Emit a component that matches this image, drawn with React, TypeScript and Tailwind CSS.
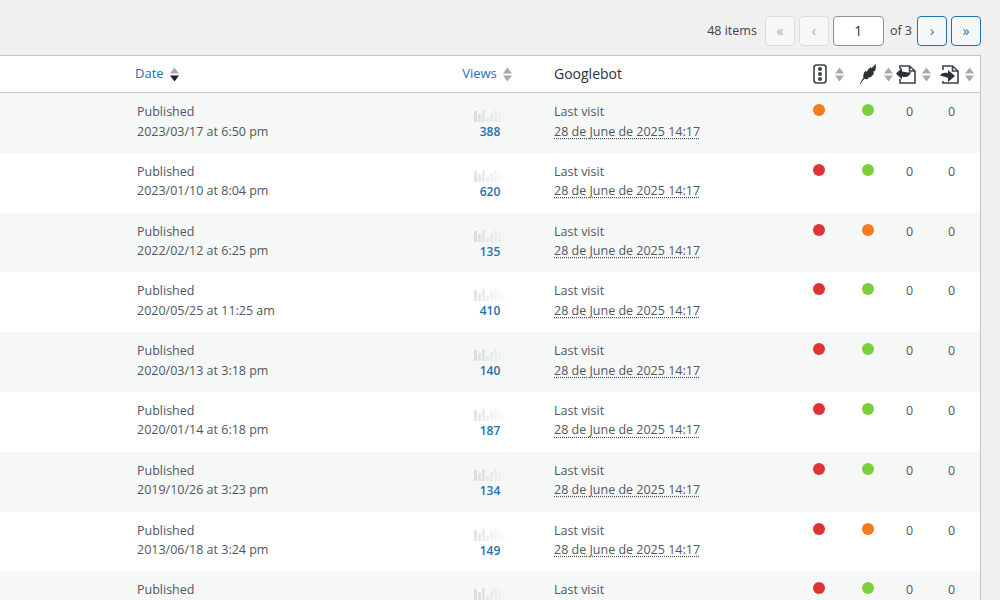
const cols = 'grid grid-cols-[127px_309px_108px_259px_49px_34px_42px_1fr]'

const rows = [
  { date: '2023/03/17 at 6:50 pm', views: 388, a: 'orange', b: 'green' },
  { date: '2023/01/10 at 8:04 pm', views: 620, a: 'red', b: 'green' },
  { date: '2022/02/12 at 6:25 pm', views: 135, a: 'red', b: 'orange' },
  { date: '2020/05/25 at 11:25 am', views: 410, a: 'red', b: 'green' },
  { date: '2020/03/13 at 3:18 pm', views: 140, a: 'red', b: 'green' },
  { date: '2020/01/14 at 6:18 pm', views: 187, a: 'red', b: 'green' },
  { date: '2019/10/26 at 3:23 pm', views: 134, a: 'red', b: 'green' },
  { date: '2013/06/18 at 3:24 pm', views: 149, a: 'red', b: 'orange' },
  { date: '2012/11/02 at 5:10 pm', views: 152, a: 'red', b: 'green' },
]

function Dot({ color }: { color: string }) {
  const bg = color === 'red' ? 'bg-[#df3434]' : color === 'orange' ? 'bg-[#f47c1c]' : 'bg-[#7ad03a]'
  return <span className={`mt-px block size-3 rounded-full ${bg}`} />
}

function Sort({ active }: { active?: boolean }) {
  return (
    <svg width="9" height="15" viewBox="0 0 9 15" className="shrink-0">
      <path d="M4.5 0.5 L9 6.5 H0Z" fill="#a7aaad" />
      <path d="M0 8.5 H9 L4.5 14.5Z" fill={active ? '#1d2327' : '#a7aaad'} />
    </svg>
  )
}

function Spark() {
  const bars = [11, 8, 12, 5, 9, 12, 9, 7]
  return (
    <svg width="32" height="13" viewBox="0 0 32 13">
      {bars.map((h, i) => (
        <rect key={i} x={i * 4} y={13 - h} width="3" height={h} fill="#000" opacity={0.1 - i * 0.012} />
      ))}
    </svg>
  )
}

function LightIcon() {
  return (
    <svg width="14" height="20" viewBox="0 0 14 20" className="shrink-0">
      <rect x="1" y="1" width="12" height="18" rx="2.5" fill="none" stroke="#3c434a" strokeWidth="1.6" />
      <circle cx="7" cy="5" r="2" fill="#3c434a" />
      <circle cx="7" cy="10" r="2" fill="#3c434a" />
      <circle cx="7" cy="15" r="2" fill="#3c434a" />
    </svg>
  )
}

function FeatherIcon() {
  return (
    <svg width="16" height="20" viewBox="0 0 16 20" className="shrink-0">
      <path
        d="M0 20 C1 17.5 2.2 15.5 3.5 13.8 C2.8 11 3.8 8 6 6.5 L6.6 8.5 C7.4 6 9 4 11 3 L11.3 4.6 C12.8 3 14.2 1.4 15.6 0 C16.2 3 15.8 5.5 14.6 7.6 L12.8 7.4 L14 9 C13 11 11.6 12.6 10 13.6 L8.2 13 L8.8 14.4 C7.2 15.4 5.6 15.4 4.4 14.8 C3 16.4 1.6 18.2 0.6 20Z"
        fill="#2c3338"
      />
    </svg>
  )
}

function InIcon() {
  return (
    <svg width="20" height="19" viewBox="0 0 20 19" className="shrink-0">
      <path d="M4 4 V1 H13.5 L19 6 V18 H4 V14 M13.5 1 V6 H19" fill="none" stroke="#3c434a" strokeWidth="1.6" />
      <path d="M0 8.5 L6 3 V6.5 C9 6.5 12 8.5 15 6.5 C14 11.5 10 13 6 11.5 V14.5 Z" fill="#2c3338" />
    </svg>
  )
}

function OutIcon() {
  return (
    <svg width="19" height="19" viewBox="0 0 19 19" className="shrink-0">
      <path d="M3 5 V1 H12.5 L18 6 V18 H3 V16" fill="none" stroke="#3c434a" strokeWidth="1.6" />
      <path d="M12.5 1 V6 H18" fill="none" stroke="#3c434a" strokeWidth="1.6" />
      <path d="M0 11 C1 8 4 7 8 8 V5 L15 11 L8 17 V13 C4 11.5 2 11 0 11Z" fill="#2c3338" />
    </svg>
  )
}

function PageButton({ label, on }: { label: string; on?: boolean }) {
  const tone = on ? 'border-[#2271b1] text-[#2271b1]' : 'border-[#dcdcde] text-[#a7aaad]'
  return (
    <span className={`flex size-[30px] items-center justify-center rounded border bg-[#f6f7f7] text-sm ${tone}`}>
      {label}
    </span>
  )
}

export default function App() {
  return (
    <div
      className="h-[600px] overflow-hidden bg-[#f0f0f1] pr-[19px] text-[12.5px] text-[#50575e]"
      style={{ fontFamily: '"Open Sans", sans-serif' }}
    >
      <div className="flex h-[55px] items-center justify-end gap-1 pt-[7px]">
        <span className="mr-1 text-[#3c434a]">48 items</span>
        <PageButton label="«" />
        <PageButton label="‹" />
        <span className="flex h-[30px] w-[51px] items-center justify-center rounded border border-[#8c8f94] bg-white text-sm text-[#2c3338]">
          1
        </span>
        <span className="mr-px ml-0.5 text-[#3c434a]">of 3</span>
        <PageButton label="›" on />
        <PageButton label="»" on />
      </div>

      <div className="border-t border-r border-[#c3c4c7] bg-white">
        <div className={`${cols} h-[37px] items-center border-b border-[#c3c4c7]`}>
          <div />
          <div className="flex items-center gap-1.5 pl-2 text-[13px] text-[#2271b1]">
            Date <Sort active />
          </div>
          <div className="flex items-center justify-center gap-1.5 pr-1.5 text-[13px] text-[#2271b1]">
            Views <Sort />
          </div>
          <div className="pl-2.5 text-sm text-[#2c3338]">Googlebot</div>
          <div className="flex items-center gap-2 pl-2.5">
            <LightIcon /> <Sort />
          </div>
          <div className="flex items-center gap-2 pl-2">
            <FeatherIcon /> <Sort />
          </div>
          <div className="flex items-center gap-1.5 pl-2.5">
            <InIcon /> <Sort />
          </div>
          <div className="flex items-center gap-1.5 pl-3">
            <OutIcon /> <Sort />
          </div>
        </div>

        {rows.map((r, i) => (
          <div
            key={r.views}
            className={`${cols} h-[59.8px] leading-[19.5px] ${i % 2 === 0 ? 'bg-[#f6f7f7]' : 'bg-white'}`}
          >
            <div />
            <div className="pt-[9px] pl-2.5">
              <div>Published</div>
              <div>{r.date}</div>
            </div>
            <div className="flex flex-col items-center pt-4">
              <Spark />
              <span className="mt-0.5 text-xs font-semibold text-[#2271b1]">{r.views}</span>
            </div>
            <div className="pt-[9px] pl-2.5">
              <div>Last visit</div>
              <div>
                <span className="underline decoration-dotted underline-offset-2">28 de June de 2025 14:17</span>
              </div>
            </div>
            <div className="pt-2.5 pl-2.5">
              <Dot color={r.a} />
            </div>
            <div className="pt-2.5 pl-2.5">
              <Dot color={r.b} />
            </div>
            <div className="pt-[9px] pl-5">0</div>
            <div className="pt-[9px] pl-5">0</div>
          </div>
        ))}
      </div>
    </div>
  )
}
